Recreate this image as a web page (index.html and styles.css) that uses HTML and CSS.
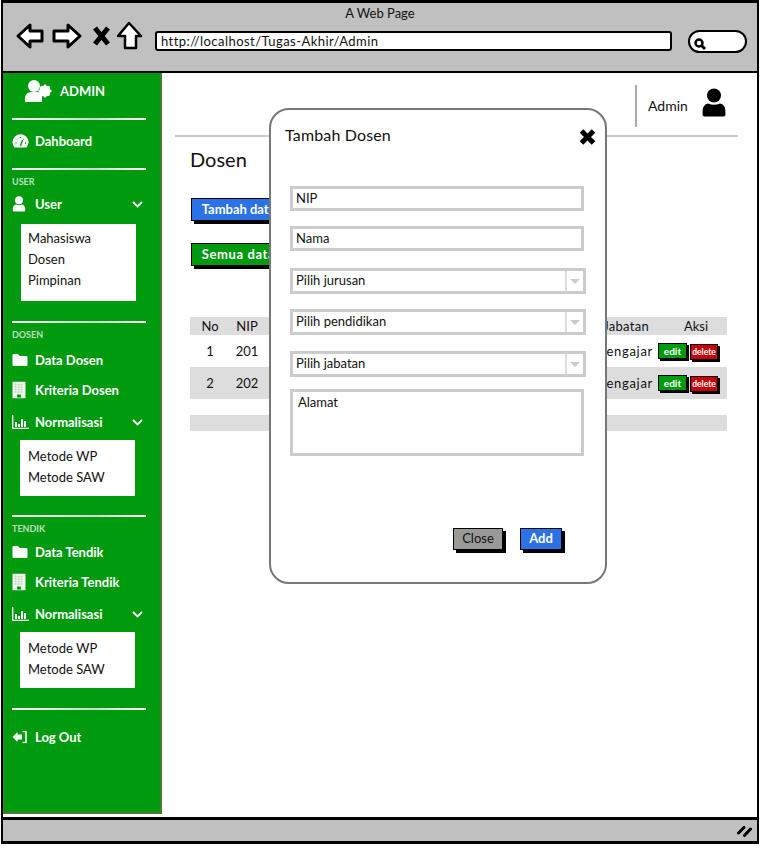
FILE: index.html
```html
<!DOCTYPE html>
<html lang="en">
  <head>
    <meta charset="UTF-8" />
    <title>A Web Page</title>
    <link rel="stylesheet" href="styles.css">
  </head>
  <body>
    <div class="window">
      <div class="chrome">
        <div class="chrome-title">A Web Page</div>
        <div class="chrome-bar">
          <svg class="nav-icons" width="130" height="30" viewBox="0 0 130 30">
            <path d="M3 15 L15 4 L15 10 L27 10 L27 20 L15 20 L15 26 Z" fill="#fff" stroke="#000" stroke-width="3" stroke-linejoin="round"/>
            <path d="M65 15 L53 4 L53 10 L39 10 L39 20 L53 20 L53 26 Z" fill="#fff" stroke="#000" stroke-width="3" stroke-linejoin="round"/>
            <path d="M80 7 L93 23 M93 7 L80 23" fill="none" stroke="#000" stroke-width="5"/>
            <path d="M114 2 L126 15 L121 15 L121 27 L110 27 L110 15 L103 15 Z" fill="#fff" stroke="#000" stroke-width="2.5" stroke-linejoin="round"/>
          </svg>
          <div class="url-box">http://localhost/Tugas-Akhir/Admin</div>
          <div class="search-pill">
            <svg width="14" height="14" viewBox="0 0 14 14">
              <circle cx="6" cy="6" r="3.5" fill="#fff" stroke="#000" stroke-width="2.5"/>
              <path d="M8.5 8.5 L12 12" stroke="#000" stroke-width="3"/>
            </svg>
          </div>
        </div>
      </div>

      <div class="main">
        <div class="sidebar">
          <div class="brand">
            <svg width="28" height="24" viewBox="0 0 28 24" fill="#fff">
              <circle cx="10" cy="7" r="6"/>
              <path d="M1 23 C0 15 4 13 8 13 L14 13 C17 13 18 15 18 17 L18 23 Z"/>
              <circle cx="21" cy="12" r="4" fill="none" stroke="#fff" stroke-width="3.4"/>
              <path d="M21 5.5 V18.5 M14.5 12 H27.5 M16.5 7.5 L25.5 16.5 M25.5 7.5 L16.5 16.5" stroke="#fff" stroke-width="1.8"/>
            </svg>
            <span>ADMIN</span>
          </div>
          <div class="side-line line-brand"></div>
          <div class="side-item gap-dash">
            <svg class="side-icon" width="17" height="14" viewBox="0 0 17 14">
              <path d="M2.5 13.5 A8 8 0 1 1 14.5 13.5 Z" fill="#fff"/>
              <path d="M8.5 12 L10.5 6 M3.5 9 H4.5 M5 5 L5.5 5.5 M8.5 3 V4 M12 5 L11.5 5.5 M13 9 H14" stroke="#009a0e" stroke-width="1.4"/>
            </svg>
            <span>Dahboard</span>
          </div>
          <div class="side-line line-dash"></div>
          <div class="side-label">USER</div>
          <div class="side-item gap-user">
            <svg class="side-icon" width="14" height="16" viewBox="0 0 14 16" fill="#fff">
              <circle cx="7" cy="4.2" r="4"/>
              <path d="M1 15.5 Q0 9 4 8.5 Q7 10 10 8.5 Q14 9 13 15.5 Z"/>
            </svg>
            <span>User</span>
            <svg class="chevron" width="11" height="7" viewBox="0 0 11 7"><path d="M1 1 L5.5 5.5 L10 1" fill="none" stroke="#fff" stroke-width="1.8"/></svg>
          </div>
          <div class="submenu submenu-user">
            <div>Mahasiswa</div>
            <div>Dosen</div>
            <div>Pimpinan</div>
          </div>
          <div class="side-line line-after-user"></div>
          <div class="side-label">DOSEN</div>
          <div class="side-item">
            <svg class="side-icon" width="16" height="13" viewBox="0 0 16 13"><path d="M1.5 0.5 H6 L7.5 2.5 H14.5 Q15.5 2.5 15.5 4 V11.5 Q15.5 12.5 14.5 12.5 H1.5 Q0.5 12.5 0.5 11.5 V1.5 Q0.5 0.5 1.5 0.5 Z" fill="#fff"/></svg>
            <span>Data Dosen</span>
          </div>
          <div class="side-item">
            <svg class="side-icon" width="14" height="17" viewBox="0 0 14 17">
              <rect width="13" height="17" x="0.5" fill="#f4f8f0"/>
              <path d="M2.5 3 H11.5 M2.5 5.5 H11.5 M2.5 8 H11.5 M2.5 10.5 H11.5" stroke="#b9d6b4" stroke-width="1.4" stroke-dasharray="2 1"/>
              <rect x="5" y="13" width="4" height="3" fill="#009a0e"/>
            </svg>
            <span>Kriteria Dosen</span>
          </div>
          <div class="side-item gap-norm">
            <svg class="side-icon" width="17" height="14" viewBox="0 0 17 14">
              <path d="M0.7 0 V13.3 H17" fill="none" stroke="#fff" stroke-width="1.3"/>
              <path d="M4 7 V12 M7 9 V12 M10 4 V12 M13 6 V12" stroke="#fff" stroke-width="2"/>
            </svg>
            <span>Normalisasi</span>
            <svg class="chevron" width="11" height="7" viewBox="0 0 11 7"><path d="M1 1 L5.5 5.5 L10 1" fill="none" stroke="#fff" stroke-width="1.8"/></svg>
          </div>
          <div class="submenu">
            <div>Metode WP</div>
            <div>Metode SAW</div>
          </div>
          <div class="side-line line-after-norm"></div>
          <div class="side-label">TENDIK</div>
          <div class="side-item gap-tendik">
            <svg class="side-icon" width="16" height="13" viewBox="0 0 16 13"><path d="M1.5 0.5 H6 L7.5 2.5 H14.5 Q15.5 2.5 15.5 4 V11.5 Q15.5 12.5 14.5 12.5 H1.5 Q0.5 12.5 0.5 11.5 V1.5 Q0.5 0.5 1.5 0.5 Z" fill="#fff"/></svg>
            <span>Data Tendik</span>
          </div>
          <div class="side-item">
            <svg class="side-icon" width="14" height="17" viewBox="0 0 14 17">
              <rect width="13" height="17" x="0.5" fill="#f4f8f0"/>
              <path d="M2.5 3 H11.5 M2.5 5.5 H11.5 M2.5 8 H11.5 M2.5 10.5 H11.5" stroke="#b9d6b4" stroke-width="1.4" stroke-dasharray="2 1"/>
              <rect x="5" y="13" width="4" height="3" fill="#009a0e"/>
            </svg>
            <span>Kriteria Tendik</span>
          </div>
          <div class="side-item gap-norm">
            <svg class="side-icon" width="17" height="14" viewBox="0 0 17 14">
              <path d="M0.7 0 V13.3 H17" fill="none" stroke="#fff" stroke-width="1.3"/>
              <path d="M4 7 V12 M7 9 V12 M10 4 V12 M13 6 V12" stroke="#fff" stroke-width="2"/>
            </svg>
            <span>Normalisasi</span>
            <svg class="chevron" width="11" height="7" viewBox="0 0 11 7"><path d="M1 1 L5.5 5.5 L10 1" fill="none" stroke="#fff" stroke-width="1.8"/></svg>
          </div>
          <div class="submenu">
            <div>Metode WP</div>
            <div>Metode SAW</div>
          </div>
          <div class="side-line line-after-norm2"></div>
          <div class="side-item gap-logout">
            <svg class="side-icon" width="15" height="13" viewBox="0 0 15 13">
              <path d="M0.5 6.5 L5.5 1.5 V4 H10 V9 H5.5 V11.5 Z" fill="#fff"/>
              <path d="M10.5 1 H14 V12 H10.5" fill="none" stroke="#fff" stroke-width="1.6"/>
            </svg>
            <span>Log Out</span>
          </div>
        </div>

        <div class="content">
          <div class="topbar">
            <div class="topbar-sep"></div>
            <span class="topbar-name">Admin</span>
            <svg width="24" height="29" viewBox="0 0 24 29" fill="#000">
              <circle cx="12" cy="7.5" r="7"/>
              <path d="M0.5 27 Q0 16 6 15.5 Q12 18 18 15.5 Q24 16 23.5 27 Q23 28.5 21 28.5 H3 Q1 28.5 0.5 27 Z"/>
            </svg>
          </div>
          <div class="page">
            <h1 class="page-title">Dosen</h1>
            <div class="btn-row"><span class="btn btn-blue btn-wide">Tambah data</span></div>
            <div class="btn-row btn-row-2"><span class="btn btn-green btn-wide">Semua data</span></div>
            <table class="data-table">
              <thead>
                <tr>
                  <th class="col-no">No</th>
                  <th class="col-nip">NIP</th>
                  <th class="col-rest"></th>
                  <th class="col-jab">Jabatan</th>
                  <th class="col-aksi">Aksi</th>
                </tr>
              </thead>
              <tbody>
                <tr>
                  <td>1</td>
                  <td>201</td>
                  <td></td>
                  <td class="cell-jab">Pengajar</td>
                  <td class="cell-aksi"><span class="mini mini-green">edit</span><span class="mini mini-red">delete</span></td>
                </tr>
                <tr class="row-grey">
                  <td>2</td>
                  <td>202</td>
                  <td></td>
                  <td class="cell-jab">Pengajar</td>
                  <td class="cell-aksi"><span class="mini mini-green">edit</span><span class="mini mini-red">delete</span></td>
                </tr>
              </tbody>
            </table>
            <div class="table-foot"></div>
          </div>
        </div>
      </div>

      <div class="statusbar">
        <svg width="15" height="11" viewBox="0 0 15 11"><path d="M1.5 7 L7 1.5 M7.5 9.5 L13.5 3" stroke="#000" stroke-width="3" stroke-linecap="round"/></svg>
      </div>

      <div class="modal">
        <div class="modal-head">
          <span class="modal-title">Tambah Dosen</span>
          <svg width="17" height="18" viewBox="0 0 17 18"><path d="M2.5 3 L14.5 15 M14.5 3 L2.5 15" stroke="#000" stroke-width="5"/></svg>
        </div>
        <div class="field">NIP</div>
        <div class="field gap-15">Nama</div>
        <div class="field field-select gap-17">
          <span>Pilih jurusan</span>
          <span class="select-arrow"></span>
        </div>
        <div class="field field-select gap-15">
          <span>Pilih pendidikan</span>
          <span class="select-arrow"></span>
        </div>
        <div class="field field-select gap-16">
          <span>Pilih jabatan</span>
          <span class="select-arrow"></span>
        </div>
        <div class="field field-area">Alamat</div>
        <div class="modal-actions">
          <span class="btn btn-grey">Close</span>
          <span class="btn btn-blue btn-add">Add</span>
        </div>
      </div>
    </div>
  </body>
</html>
```

FILE: styles.css
```css
body {
  margin: 0;
  background: #fff;
  font-family: Lato, "Open Sans", sans-serif;
  color: #111;
}
.window {
  position: relative;
  box-sizing: border-box;
  width: 758px;
  height: 844px;
  margin-left: 1px;
  border: solid #000;
  border-width: 3px 2px;
  display: flex;
  flex-direction: column;
  overflow: hidden;
}
.chrome {
  box-sizing: border-box;
  height: 70px;
  background: #c0c0c0;
  border-bottom: 2px solid #000;
  flex: none;
}
.chrome-title {
  text-align: center;
  font-size: 13px;
  line-height: 16px;
  padding-top: 2px;
}
.chrome-bar {
  display: flex;
  align-items: center;
  height: 30px;
  margin-top: 5px;
  padding-left: 12px;
}
.nav-icons {
  margin-top: -10px;
}
.url-box {
  box-sizing: border-box;
  width: 517px;
  height: 20px;
  margin-left: 10px;
  padding-left: 4px;
  background: #fff;
  border: 2px solid #000;
  border-radius: 3px;
  font-size: 13px;
  line-height: 16px;
  letter-spacing: 0.45px;
}
.search-pill {
  box-sizing: border-box;
  width: 59px;
  height: 23px;
  margin-left: 16px;
  padding: 3px 0 0 3px;
  background: #fff;
  border: 2px solid #000;
  border-radius: 12px;
}
.main {
  flex: 1;
  display: flex;
  min-height: 0;
}
.sidebar {
  box-sizing: border-box;
  width: 160px;
  height: 741px;
  margin-left: -1px;
  background: #009a0e;
  border: solid #4a7a2c;
  border-width: 0 2px 2px 2px;
  flex: none;
  color: #fff;
  font-weight: 700;
  font-size: 13px;
}
.brand {
  display: flex;
  align-items: center;
  height: 36px;
  padding-left: 20px;
}
.brand span {
  margin-left: 8px;
}
.side-line {
  height: 2px;
  margin: 0 14px 0 8px;
  background: linear-gradient(90deg, #fff, #c8dcc2 60%, #fff);
}
.line-brand { margin-top: 9px; }
.line-dash { margin-top: 12px; }
.line-after-user { margin-top: 20px; }
.line-after-norm { margin-top: 19px; }
.line-after-norm2 { margin-top: 20px; }
.side-label {
  height: 12px;
  line-height: 12px;
  margin: 6px 0 0 8px;
  font-size: 9px;
  color: #bfe0bf;
}
.side-item {
  position: relative;
  display: flex;
  align-items: center;
  height: 30px;
  padding-left: 31px;
}
.side-icon {
  position: absolute;
  left: 8px;
  top: 50%;
  transform: translateY(-50%);
}
.chevron {
  position: absolute;
  right: 17px;
  top: 12px;
}
.gap-dash { margin-top: 6px; }
.gap-user { margin-top: 1px; }
.gap-norm { margin-top: 2px; }
.gap-logout { margin-top: 12px; }
.side-label + .side-item { margin-top: 4px; }
.side-label + .gap-user { margin-top: 1px; }
.side-label + .gap-tendik { margin-top: 2px; }
.submenu {
  box-sizing: border-box;
  width: 115px;
  height: 56px;
  margin: 3px 0 0 16px;
  padding: 6px 0 0 8px;
  background: #fff;
  color: #111;
  font-weight: 400;
  font-size: 13px;
  line-height: 21px;
}
.submenu-user {
  height: 77px;
  margin: 5px 0 0 17px;
  padding: 4px 0 0 7px;
}
.content {
  flex: 1;
  min-width: 0;
  padding: 0 19px 0 13px;
}
.topbar {
  box-sizing: border-box;
  display: flex;
  align-items: flex-start;
  height: 64px;
  padding-top: 15px;
  border-bottom: 2px solid #ccc;
}
.topbar-sep {
  width: 2px;
  height: 42px;
  margin: -3px 11px 0 460px;
  background: #aaa;
}
.topbar-name {
  width: 54px;
  font-size: 14px;
  line-height: 36px;
}
.page {
  padding-left: 15px;
}
.page-title {
  margin: 0;
  padding-top: 10px;
  font-size: 20px;
  font-weight: 400;
  line-height: 24px;
}
.btn {
  display: inline-block;
  box-sizing: border-box;
  border: 1.5px solid #000;
  box-shadow: 3px 3px 0 #000;
  font-size: 13px;
  text-align: center;
}
.btn-wide {
  width: 95px;
  height: 23px;
  line-height: 20px;
  font-weight: 700;
  color: #fff;
}
.btn-row {
  margin: 27px 0 0 1px;
  height: 26px;
}
.btn-row-2 {
  margin-top: 19px;
}
.btn-blue { background: #2a72e6; color: #fff; font-weight: 700; }
.btn-green { background: #009a0e; letter-spacing: 0.6px; }
.btn-grey { background: #999; }
.data-table {
  width: 537px;
  margin-top: 48px;
  border-collapse: collapse;
  table-layout: fixed;
  font-size: 13px;
  text-align: center;
}
.data-table th {
  height: 17px;
  padding: 1px 0 0;
  font-weight: 400;
  background: #ddd;
  line-height: 17px;
}
.data-table td {
  height: 32px;
  padding: 0;
  box-sizing: border-box;
}
.col-no { width: 40px; }
.col-nip { width: 34px; }
.data-table .col-jab {
  width: 59px;
  padding-right: 6px;
  box-sizing: border-box;
  text-align: right;
  letter-spacing: 0.3px;
}
.data-table .col-aksi {
  width: 72px;
  padding-left: 10px;
  box-sizing: border-box;
}
.data-table .cell-jab {
  padding-right: 2px;
  text-align: right;
  white-space: nowrap;
  letter-spacing: 0.7px;
}
.data-table .cell-aksi {
  padding-left: 3px;
  text-align: left;
  white-space: nowrap;
}
.row-grey td {
  background: #ddd;
}
.mini {
  display: inline-block;
  box-sizing: border-box;
  height: 16px;
  line-height: 14px;
  border: 1px solid #000;
  box-shadow: 2px 2px 0 #000;
  color: #fff;
  font-weight: 700;
  font-size: 10px;
  text-align: center;
}
.mini-green { width: 29px; background: #009a0e; margin-right: 3px; }
.mini-red { width: 28px; background: #c8000a; font-size: 8.5px; }
.table-foot {
  width: 537px;
  height: 16px;
  margin-top: 16px;
  background: #ddd;
}
.statusbar {
  box-sizing: border-box;
  height: 24px;
  flex: none;
  display: flex;
  justify-content: flex-end;
  align-items: center;
  padding: 1px 5px 0 0;
  background: #c0c0c0;
  border-top: 3px solid #000;
}
.modal {
  position: absolute;
  left: 266px;
  top: 105px;
  box-sizing: border-box;
  width: 338px;
  height: 476px;
  padding: 0 21px 0 19px;
  background: #fff;
  border: 2px solid #777;
  border-radius: 20px;
}
.modal-head {
  display: flex;
  justify-content: space-between;
  align-items: center;
  height: 76px;
  margin: 0 -12px 0 -5px;
  padding: 0 0 22px;
  box-sizing: border-box;
}
.modal-title {
  margin-bottom: 6px;
  font-size: 16px;
  letter-spacing: 0.15px;
}
.field {
  box-sizing: border-box;
  width: 294px;
  height: 25px;
  padding-left: 3px;
  border: 3px solid #ccc;
  background: #fff;
  font-size: 13px;
  line-height: 19px;
}
.gap-15 { margin-top: 15px; }
.gap-16 { margin-top: 16px; }
.gap-17 { margin-top: 17px; }
.field-select {
  display: flex;
  justify-content: space-between;
  width: 296px;
  height: 26px;
  padding: 0 0 0 3px;
}
.select-arrow {
  position: relative;
  width: 16px;
  border-left: 2px solid #ddd;
}
.select-arrow::after {
  content: "";
  position: absolute;
  left: 3px;
  top: 8px;
  border: solid transparent;
  border-width: 5px 5px 0;
  border-top-color: #ccc;
}
.field-area {
  height: 67px;
  margin-top: 12px;
  padding-left: 5px;
  line-height: 20px;
}
.modal-actions {
  display: flex;
  justify-content: flex-end;
  gap: 17px;
  margin: 72px 0 0;
  padding-right: 22px;
}
.modal-actions .btn {
  height: 22px;
  line-height: 19px;
}
.btn-grey { width: 50px; }
.btn-add { width: 42px; }
```
